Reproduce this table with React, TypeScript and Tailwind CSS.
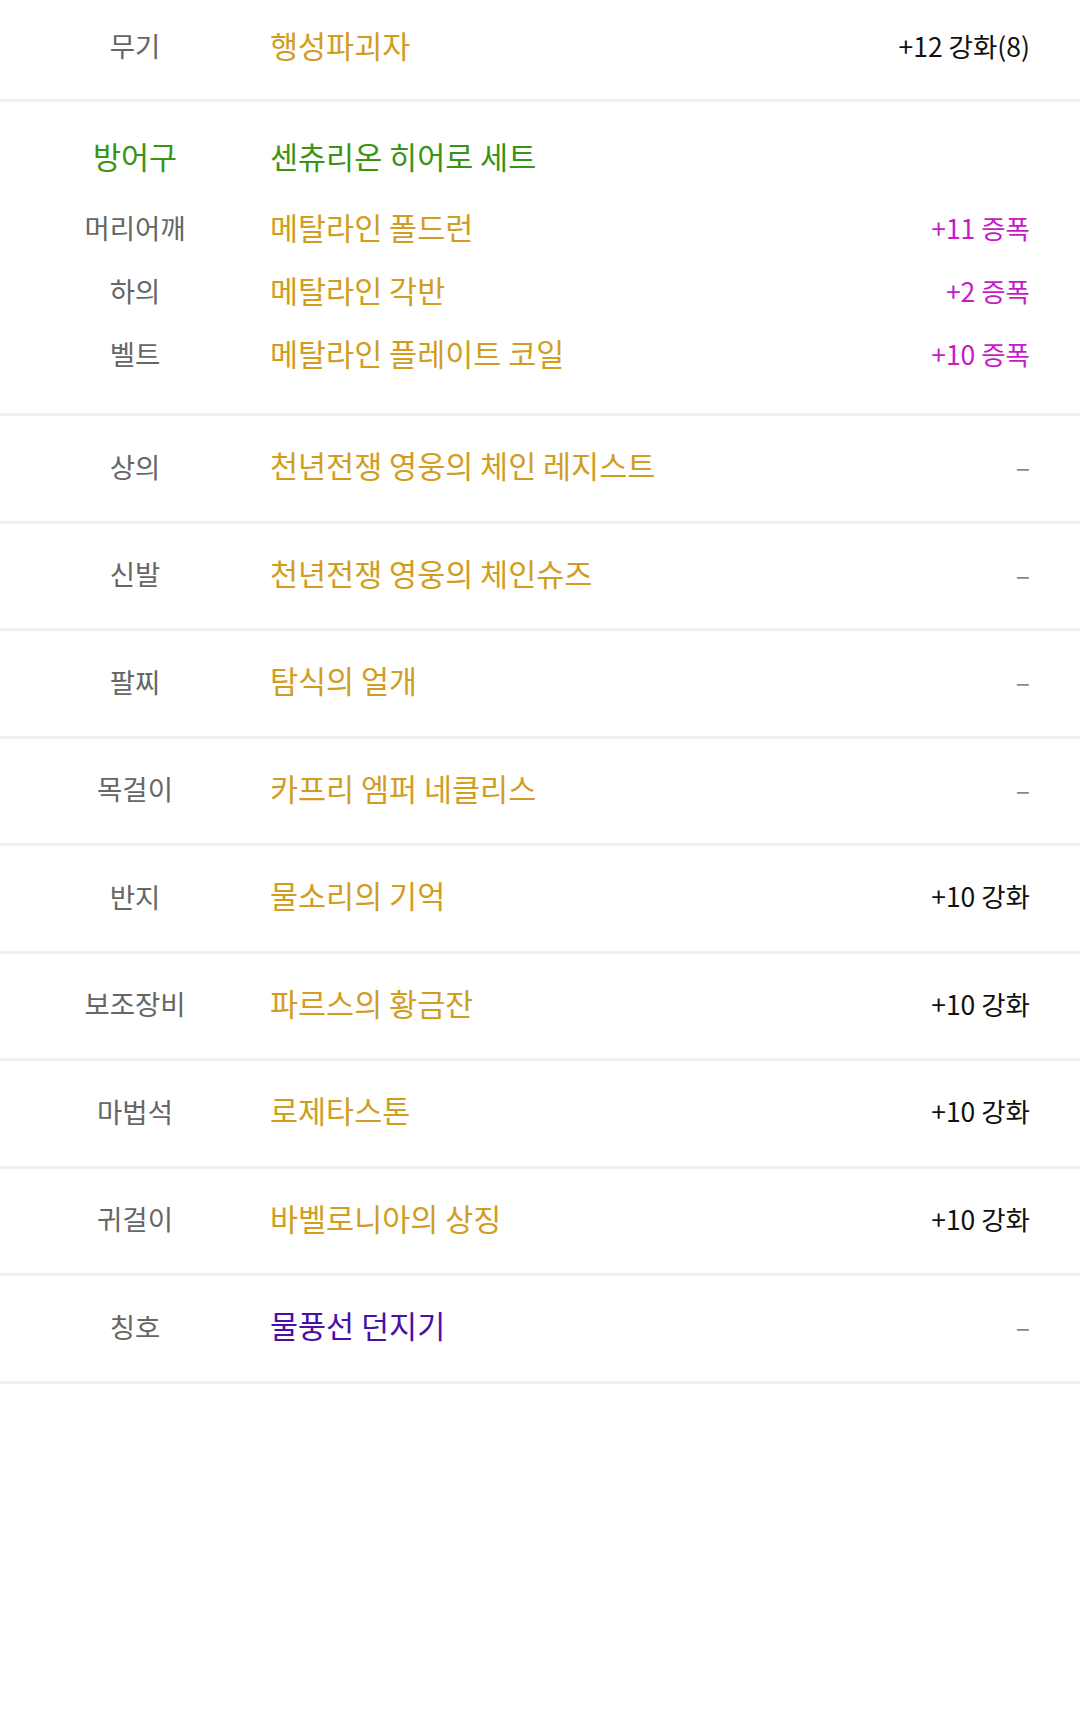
import React from "react";

type Row = { label: string; name: string; value: string; valueKind: "enh" | "none" };

const rows: Row[] = [
  { label: "상의", name: "천년전쟁 영웅의 체인 레지스트", value: "–", valueKind: "none" },
  { label: "신발", name: "천년전쟁 영웅의 체인슈즈", value: "–", valueKind: "none" },
  { label: "팔찌", name: "탐식의 얼개", value: "–", valueKind: "none" },
  { label: "목걸이", name: "카프리 엠퍼 네클리스", value: "–", valueKind: "none" },
  { label: "반지", name: "물소리의 기억", value: "+10 강화", valueKind: "enh" },
  { label: "보조장비", name: "파르스의 황금잔", value: "+10 강화", valueKind: "enh" },
  { label: "마법석", name: "로제타스톤", value: "+10 강화", valueKind: "enh" },
  { label: "귀걸이", name: "바벨로니아의 상징", value: "+10 강화", valueKind: "enh" },
];

const font = { fontFamily: '"Noto Sans CJK KR", "Noto Sans", sans-serif' };

function Value({ v, kind }: { v: string; kind: "enh" | "none" }) {
  return (
    <div
      className={
        kind === "none"
          ? "ml-auto text-[26.5px] text-[#888888]"
          : "ml-auto text-[26.5px] text-[#111111]"
      }
    >
      {v}
    </div>
  );
}

export default function App() {
  return (
    <div className="w-[1080px] min-h-[1711px] bg-white" style={font}>
      {/* Weapon */}
      <div className="flex h-[102px] items-center border-b-[3px] border-[#f0f0f0] pb-[7px] pr-[50px]">
        <div className="w-[270px] shrink-0 text-center text-[27.5px] text-[#666666]">무기</div>
        <div className="text-[30.5px] text-[#d19d1f]">행성파괴자</div>
        <div className="ml-auto text-[26.5px] text-[#111111]">+12 강화(8)</div>
      </div>

      {/* Armor set */}
      <div className="flex flex-col border-b-[3px] border-[#f0f0f0] pt-[24px] pb-[28px] pr-[50px]">
        <div className="flex h-[62px] items-center">
          <div className="w-[270px] shrink-0 text-center text-[30.5px] text-[#3a9414]">방어구</div>
          <div className="text-[30.5px] text-[#3a9414]">센츄리온 히어로 세트</div>
        </div>
        <div className="mt-[8px] flex flex-col">
          {[
            ["머리어깨", "메탈라인 폴드런", "+11 증폭"],
            ["하의", "메탈라인 각반", "+2 증폭"],
            ["벨트", "메탈라인 플레이트 코일", "+10 증폭"],
          ].map(([l, n, v]) => (
            <div key={l} className="flex h-[63px] items-center">
              <div className="w-[270px] shrink-0 text-center text-[27.5px] text-[#666666]">{l}</div>
              <div className="text-[30.5px] text-[#d19d1f]">{n}</div>
              <div className="ml-auto text-[26.5px] text-[#c41bc8]">{v}</div>
            </div>
          ))}
        </div>
      </div>

      {rows.map((r) => (
        <div
          key={r.label}
          className="flex h-[107.5px] items-center border-b-[3px] border-[#f0f0f0] pb-[4px] pr-[50px]"
        >
          <div className="w-[270px] shrink-0 text-center text-[27.5px] text-[#666666]">{r.label}</div>
          <div className="text-[30.5px] text-[#d19d1f]">{r.name}</div>
          <Value v={r.value} kind={r.valueKind} />
        </div>
      ))}

      {/* Title */}
      <div className="flex h-[107.5px] items-center border-b-[3px] border-[#f0f0f0] pb-[4px] pr-[50px]">
        <div className="w-[270px] shrink-0 text-center text-[27.5px] text-[#666666]">칭호</div>
        <div className="text-[30.5px] text-[#4a0fa8]">물풍선 던지기</div>
        <Value v="–" kind="none" />
      </div>
    </div>
  );
}
